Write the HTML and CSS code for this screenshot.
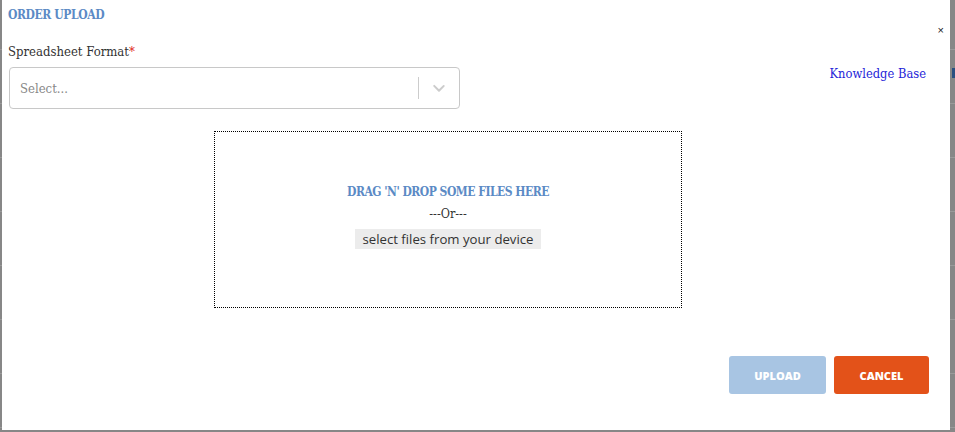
FILE: index.html
```html
<!DOCTYPE html>
<html lang="en">
<head>
    <meta charset="UTF-8">
    <meta name="viewport" content="width=device-width, initial-scale=1.0">
    <title>Order Upload</title>
    <link rel="stylesheet" href="styles.css">
</head>
<body>
    <!-- Page behind the modal (only edges visible) -->
    <div class="backdrop">
        <span class="backdrop-mark"></span>
    </div>

    <div class="modal">
        <!-- Header -->
        <div class="modal-header">
            <h2 class="modal-title">ORDER UPLOAD</h2>
            <button class="close-btn" aria-label="Close">&times;</button>
        </div>

        <!-- Format select -->
        <div class="form-row">
            <div class="field">
                <label class="field-label">Spreadsheet Format<span class="required">*</span></label>
                <div class="select">
                    <span class="select-placeholder">Select...</span>
                    <span class="select-sep"></span>
                    <span class="select-arrow">
                        <svg width="20" height="20" viewBox="0 0 20 20"><path d="M4.5 7.2a1 1 0 0 1 1.4 0L10 11.3l4.1-4.1a1 1 0 0 1 1.4 1.4l-4.8 4.8a1 1 0 0 1-1.4 0L4.5 8.6a1 1 0 0 1 0-1.4z" fill="#ccc"/></svg>
                    </span>
                </div>
            </div>
            <a class="kb-link" href="#">Knowledge Base</a>
        </div>

        <!-- Drop zone -->
        <div class="dropzone">
            <div class="dropzone-title">DRAG 'N' DROP SOME FILES HERE</div>
            <div class="dropzone-or">---Or---</div>
            <button class="browse-btn">select files from your device</button>
        </div>

        <!-- Footer -->
        <div class="modal-footer">
            <button class="btn btn-upload">UPLOAD</button>
            <button class="btn btn-cancel">CANCEL</button>
        </div>
    </div>
</body>
</html>
```

FILE: styles.css
```css
/* General */
html, body {
    margin: 0;
    height: 100%;
}

body {
    position: relative;
    background-color: #878787;
    font-family: "DejaVu Serif Condensed", "DejaVu Serif", serif;
    color: #333;
    overflow: hidden;
}

.backdrop {
    position: absolute;
    inset: 0;
    background: repeating-linear-gradient(
        to bottom,
        #878787 0px,
        #878787 53px,
        #9a9a9a 53px,
        #9a9a9a 54px
    );
    background-position: 0 -4px;
}

.backdrop-mark {
    position: absolute;
    right: 0;
    top: 68px;
    width: 3px;
    height: 10px;
    background-color: #2b4f80;
}

/* Modal */
.modal {
    position: relative;
    width: 948px;
    height: 430px;
    margin-left: 2px;
    background-color: #fff;
    box-sizing: border-box;
    padding: 8px 21px 0 6px;
    display: flex;
    flex-direction: column;
}

.modal-header {
    display: flex;
    justify-content: space-between;
    align-items: flex-start;
    height: 36px;
}

.modal-title {
    margin: 0;
    font-size: 12px;
    letter-spacing: -0.4px;
    font-weight: bold;
    color: #5b8ac5;
    line-height: 15px;
}

.close-btn {
    margin: 16px -15px 0 0;
    padding: 0;
    border: none;
    background: none;
    font-family: Arial, sans-serif;
    font-size: 11px;
    line-height: 12px;
    color: #222;
    cursor: pointer;
}

/* Select row */
.form-row {
    display: flex;
    justify-content: space-between;
    align-items: flex-start;
}

.field-label {
    display: block;
    font-size: 13px;
    line-height: 16px;
    margin-bottom: 7px;
    color: #333;
}

.required {
    color: #e02020;
}

.select {
    width: 451px;
    height: 42px;
    box-sizing: border-box;
    margin-left: 1px;
    border: 1px solid #c8c8c8;
    border-radius: 4px;
    display: flex;
    align-items: center;
    padding-left: 10px;
}

.select-placeholder {
    flex: 1;
    font-size: 13px;
    color: #888;
}

.select-sep {
    width: 1px;
    height: 22px;
    background-color: #ccc;
}

.select-arrow {
    width: 40px;
    display: flex;
    justify-content: center;
    align-items: center;
}

.kb-link {
    margin-top: 22px;
    margin-right: 3px;
    font-size: 12.8px;
    color: #2525d8;
    text-decoration: none;
    line-height: 16px;
}

/* Drop zone */
.dropzone {
    width: 468px;
    height: 177px;
    box-sizing: border-box;
    margin: 22px 0 0 206px;
    border: 1px dotted #000;
    display: flex;
    flex-direction: column;
    align-items: center;
    padding-top: 52px;
}

.dropzone-title {
    font-size: 12px;
    letter-spacing: -0.5px;
    font-weight: bold;
    color: #5b8ac5;
    line-height: 16px;
}

.dropzone-or {
    font-size: 12.5px;
    line-height: 16px;
    margin-top: 6px;
    color: #333;
}

.browse-btn {
    margin-top: 7px;
    height: 20px;
    padding: 0 7px;
    border: none;
    background-color: #ececec;
    font-family: "Open Sans", sans-serif;
    font-size: 13.2px;
    color: #333;
    cursor: pointer;
}

/* Footer */
.modal-footer {
    display: flex;
    justify-content: flex-end;
    gap: 8px;
    margin-top: 48px;
}

.btn {
    height: 38px;
    border: none;
    border-radius: 3px;
    color: #fff;
    font-family: "Open Sans", sans-serif;
    font-weight: 800;
    font-size: 11px;
    cursor: pointer;
}

.btn-upload {
    width: 97px;
    background-color: #a8c5e3;
}

.btn-cancel {
    width: 95px;
    background-color: #e35219;
}
```
